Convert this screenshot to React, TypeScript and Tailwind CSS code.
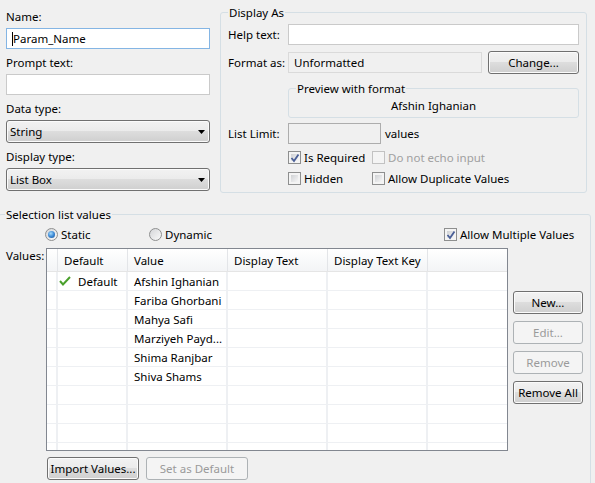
import React from 'react';

const btn =
  'flex items-center justify-center h-[23px] rounded-[3px] border border-[#707070] bg-[linear-gradient(#f2f2f2_0%,#ebebeb_49%,#dddddd_50%,#cfcfcf_100%)] shadow-[inset_0_0_0_1px_#fbfbfb] text-black';
const btnOff =
  'flex items-center justify-center h-[23px] rounded-[3px] border border-[#adb2b5] bg-[#f4f4f4] text-[#9a9a9a]';

const CheckBox: React.FC<{ checked?: boolean; disabled?: boolean }> = ({ checked, disabled }) => (
  <div
    className={`relative w-[13px] h-[13px] shrink-0 border p-[2px] ${
      disabled ? 'border-[#c2c2c2] bg-[#f4f4f4]' : 'border-[#8e8f8f] bg-[#f4f4f4]'
    }`}
  >
    {!disabled && <div className="w-full h-full bg-[linear-gradient(135deg,#cfd1d4,#f6f6f6)]" />}
    {checked && (
      <svg className="absolute left-[1px] top-[1px]" width="10" height="10" viewBox="0 0 10 10">
        <path d="M1.5 5 L4 8 L8.5 1.5" fill="none" stroke="#4a5f97" strokeWidth="1.8" />
      </svg>
    )}
  </div>
);

const Radio: React.FC<{ checked?: boolean }> = ({ checked }) => (
  <div className="flex items-center justify-center w-[13px] h-[13px] shrink-0 rounded-full border border-[#8e8f8f] bg-[linear-gradient(135deg,#d4d5d8,#fafafa)]">
    {checked && (
      <div className="w-[7px] h-[7px] rounded-full bg-[radial-gradient(circle_at_40%_35%,#a6dcfb_0%,#3d8ad6_50%,#1b4f8f_100%)]" />
    )}
  </div>
);

const Combo: React.FC<{ value: string }> = ({ value }) => (
  <div className={`${btn} !justify-between pl-[3px] pr-[4px]`}>
    <span>{value}</span>
    <svg width="7" height="4" viewBox="0 0 7 4">
      <path d="M0 0 H7 L3.5 4 Z" fill="#000" />
    </svg>
  </div>
);

const cols = [11, 70, 100, 100, 100];

const rows = [
  { def: true, value: 'Afshin Ighanian' },
  { value: 'Fariba Ghorbani' },
  { value: 'Mahya Safi' },
  { value: 'Marziyeh Payd...' },
  { value: 'Shima Ranjbar' },
  { value: 'Shiva Shams' },
  {}, {}, {}, {},
] as { def?: boolean; value?: string }[];

export default function App() {
  return (
    <div className="w-[595px] h-[483px] overflow-hidden bg-[#f0f0f0] text-[11.5px] leading-[15px] text-black font-['Noto_Sans',sans-serif]">
      <div className="flex items-start pl-[6px]">
        {/* left column */}
        <div className="w-[204px] pt-[9px] flex flex-col">
          <div className="h-[15px]">Name:</div>
          <div className="mt-[4px] h-[21px] flex items-center pl-[5px] bg-white border border-[#84b5e4]">
            <span className="inline-block w-px h-[14px] bg-black" />
            <span>Param_Name</span>
          </div>
          <div className="mt-[6px] h-[15px]">Prompt text:</div>
          <div className="mt-[4px] h-[21px] bg-white border border-[#cacaca]" />
          <div className="mt-[6px] h-[15px]">Data type:</div>
          <div className="mt-[4px]">
            <Combo value="String" />
          </div>
          <div className="mt-[6px] h-[15px]">Display type:</div>
          <div className="mt-[4px]">
            <Combo value="List Box" />
          </div>
        </div>

        {/* Display As */}
        <fieldset className="ml-[10px] mt-[5px] w-[367px] min-w-0 p-0 border border-[#d5dfe5] rounded-[3px]">
          <legend className="ml-[7px] px-[1px] h-[15px]">Display As</legend>
          <div className="px-[7px] pb-[6px]">
            <div className="mt-[4px] flex items-center h-[21px]">
              <div className="w-[60px]">Help text:</div>
              <div className="flex-1 h-[21px] bg-white border border-[#cacaca]" />
            </div>
            <div className="mt-[6px] flex items-center h-[23px]">
              <div className="w-[60px]">Format as:</div>
              <div className="w-[194px] h-[21px] flex items-center pl-[5px] border border-[#dadada]">Unformatted</div>
              <div className={`${btn} ml-[6px] w-[91px]`}>Change...</div>
            </div>
            <fieldset className="mt-[7px] ml-[60px] min-w-0 p-0 border border-[#d5dfe5] rounded-[3px]">
              <legend className="ml-[7px] px-[1px] h-[15px]">Preview with format</legend>
              <div className="pt-[2px] pb-[4px] text-center">Afshin Ighanian</div>
            </fieldset>
            <div className="mt-[5px] flex items-center h-[21px]">
              <div className="w-[60px]">List Limit:</div>
              <div className="w-[93px] h-[21px] border border-[#adadad]" />
              <div className="ml-[4px]">values</div>
            </div>
            <div className="mt-[6px] pl-[60px] flex items-center h-[15px]">
              <div className="w-[84px] flex items-center gap-[3px]">
                <CheckBox checked />
                <span>Is Required</span>
              </div>
              <div className="flex items-center gap-[3px] text-[#a0a0a0]">
                <CheckBox disabled />
                <span>Do not echo input</span>
              </div>
            </div>
            <div className="mt-[6px] pl-[60px] flex items-center h-[15px]">
              <div className="w-[84px] flex items-center gap-[3px]">
                <CheckBox />
                <span>Hidden</span>
              </div>
              <div className="flex items-center gap-[3px]">
                <CheckBox />
                <span>Allow Duplicate Values</span>
              </div>
            </div>
          </div>
        </fieldset>
      </div>

      {/* Selection list values */}
      <fieldset className="mt-[14px] -ml-[2px] w-[593px] min-w-0 p-0 border border-[#d5dfe5] rounded-[3px] h-[300px]">
        <legend className="ml-[6px] px-[1px] h-[15px]">Selection list values</legend>
        <div className="pl-[7px]">
          <div className="mt-[5px] flex items-center h-[15px]">
            <div className="w-[143px] pl-[39px] flex items-center gap-[3px]">
              <Radio checked />
              <span>Static</span>
            </div>
            <div className="w-[295px] flex items-center gap-[3px]">
              <Radio />
              <span>Dynamic</span>
            </div>
            <div className="flex items-center gap-[3px]">
              <CheckBox checked />
              <span>Allow Multiple Values</span>
            </div>
          </div>

          <div className="mt-[6px] flex items-start">
            <div className="w-[40px] h-[15px]">Values:</div>
            <div className="w-[462px] h-[203px] border border-[#828790] bg-white overflow-hidden">
              <div className="flex h-[23px] border-b border-[#e5e5e5] bg-[linear-gradient(#ffffff,#f3f4f6)]">
                {['', 'Default', 'Value', 'Display Text', 'Display Text Key'].map((h, i) => (
                  <div
                    key={i}
                    style={{ width: cols[i] }}
                    className="shrink-0 flex items-center pt-[1px] pl-[6px] border-r border-[#e3e5e8]"
                  >
                    {h}
                  </div>
                ))}
                <div className="flex-1" />
              </div>
              {rows.map((r, ri) => (
                <div key={ri} className="flex h-[19px] border-b border-[#eef0f3]">
                  <div style={{ width: cols[0] }} className="shrink-0 border-r-2 border-[#eef0f3]" />
                  <div style={{ width: cols[1] }} className="shrink-0 flex items-center border-r-2 border-[#eef0f3]">
                    {r.def && (
                      <>
                        <svg className="ml-[1px]" width="12" height="10" viewBox="0 0 12 10">
                          <path d="M1 5 L4 8.5 L11 1" fill="none" stroke="#4aa02c" strokeWidth="2" />
                        </svg>
                        <span className="ml-[7px]">Default</span>
                      </>
                    )}
                  </div>
                  <div style={{ width: cols[2] }} className="shrink-0 flex items-center pl-[6px] border-r-2 border-[#eef0f3] whitespace-nowrap">
                    {r.value}
                  </div>
                  <div style={{ width: cols[3] }} className="shrink-0 border-r-2 border-[#eef0f3]" />
                  <div style={{ width: cols[4] }} className="shrink-0 border-r-2 border-[#eef0f3]" />
                  <div className="flex-1" />
                </div>
              ))}
            </div>
            <div className="ml-[5px] pt-[43px] w-[70px] flex flex-col gap-[7px]">
              <div className={btn}>New...</div>
              <div className={btnOff}>Edit...</div>
              <div className={btnOff}>Remove</div>
              <div className={btn}>Remove All</div>
            </div>
          </div>

          <div className="mt-[6px] pl-[41px] flex gap-[7px]">
            <div className={`${btn} w-[92px]`}>Import Values...</div>
            <div className={`${btnOff} w-[102px]`}>Set as Default</div>
          </div>
        </div>
      </fieldset>
    </div>
  );
}
